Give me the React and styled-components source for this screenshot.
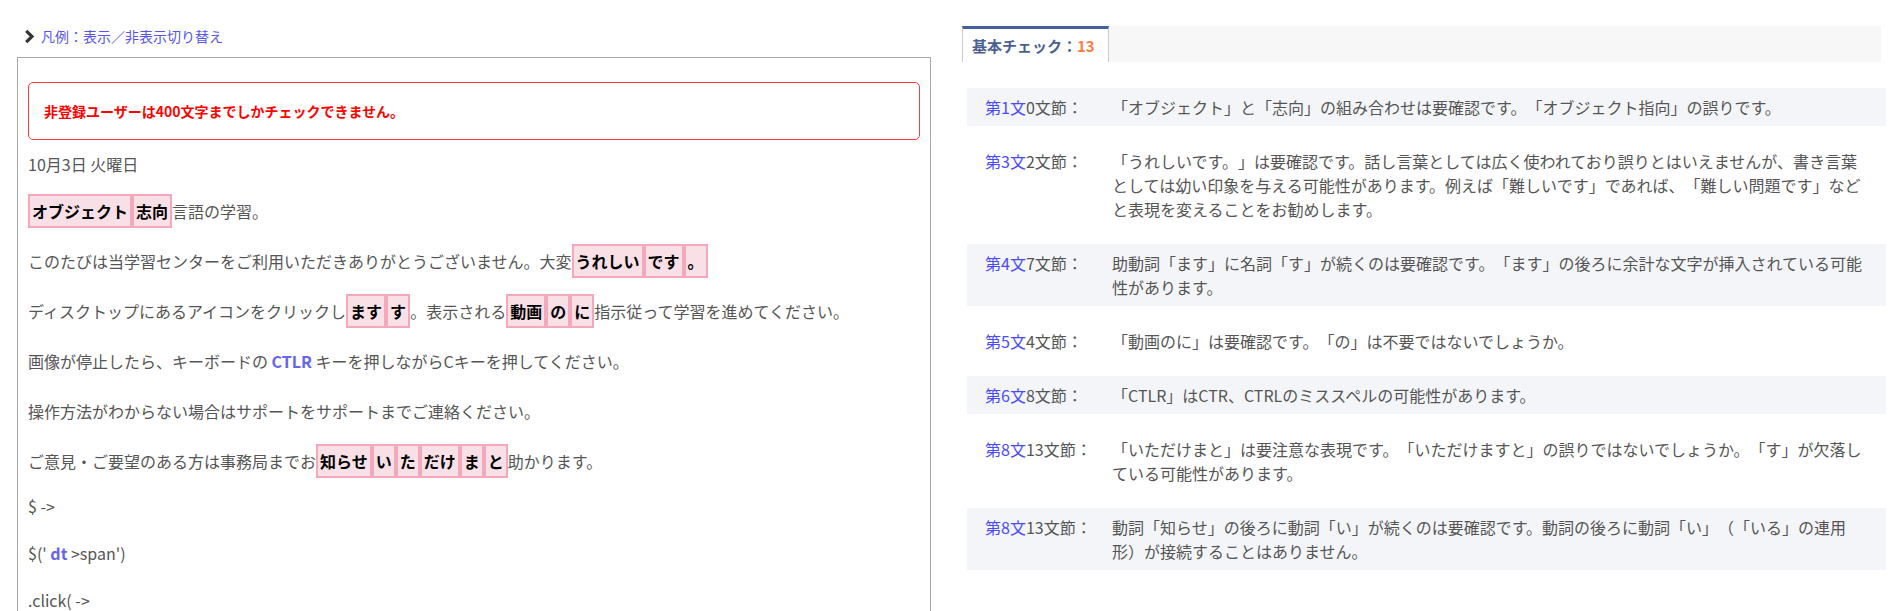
import React from 'react';
import styled, { createGlobalStyle } from 'styled-components';

const GlobalStyle = createGlobalStyle`
  html, body {
    margin: 0;
    background: #fff;
  }
  body {
    font-family: "Noto Sans CJK JP", "Noto Sans", sans-serif;
    color: #555;
    text-spacing-trim: space-all;
  }
`;

// check results shown in the right column
const results = [
  { sentence: 1, clause: 0, text: '「オブジェクト」と「志向」の組み合わせは要確認です。「オブジェクト指向」の誤りです。' },
  { sentence: 3, clause: 2, text: '「うれしいです。」は要確認です。話し言葉としては広く使われており誤りとはいえませんが、書き言葉 としては幼い印象を与える可能性があります。例えば「難しいです」であれば、「難しい問題です」などと表現を変えることをお勧めします。' },
  { sentence: 4, clause: 7, text: '助動詞「ます」に名詞「す」が続くのは要確認です。「ます」の後ろに余計な文字が挿入されている可能性があります。' },
  { sentence: 5, clause: 4, text: '「動画のに」は要確認です。「の」は不要ではないでしょうか。' },
  { sentence: 6, clause: 8, text: '「CTLR」はCTR、CTRLのミススペルの可能性があります。' },
  { sentence: 8, clause: 13, text: '「いただけまと」は要注意な表現です。「いただけますと」の誤りではないでしょうか。「す」が欠落している可能性があります。' },
  { sentence: 8, clause: 13, text: '動詞「知らせ」の後ろに動詞「い」が続くのは要確認です。動詞の後ろに動詞「い」（「いる」の連用形）が接続することはありません。' },
];

const App = () => (
  <>
    <GlobalStyle />
    <Page>
      <LeftColumn>
        <LegendToggle type="button">
          <svg width="11" height="15" viewBox="0 0 11 15">
            <path d="M2.2 1.8 L8 7.5 L2.2 13.2" fill="none" stroke="#333" strokeWidth="3.2" />
          </svg>
          凡例：表示／非表示切り替え
        </LegendToggle>

        <Editor>
          <Alert>非登録ユーザーは400文字までしかチェックできません。</Alert>
          <Para $gap={21}>10月3日 火曜日</Para>
          <Para><Mark>オブジェクト</Mark><Mark>志向</Mark>言語の学習。</Para>
          <Para>
            このたびは当学習センターをご利用いただきありがとうございません。大変
            <Mark>うれしい</Mark><Mark>です</Mark><Mark>。</Mark>
          </Para>
          <Para>
            ディスクトップにあるアイコンをクリックし<Mark>ます</Mark><Mark>す</Mark>。表示される
            <Mark>動画</Mark><Mark>の</Mark><Mark>に</Mark>指示従って学習を進めてください。
          </Para>
          <Para>画像が停止したら、キーボードの <Keyword>CTLR</Keyword> キーを押しながらCキーを押してください。</Para>
          <Para>操作方法がわからない場合はサポートをサポートまでご連絡ください。</Para>
          <Para $gap={19}>
            ご意見・ご要望のある方は事務局までお
            <Mark>知らせ</Mark><Mark>い</Mark><Mark>た</Mark><Mark>だけ</Mark><Mark>ま</Mark><Mark>と</Mark>助かります。
          </Para>
          <Para $gap={21}>$ -&gt;</Para>
          <Para $gap={21}>$(' <Keyword>dt</Keyword> &gt;span')</Para>
          <Para $gap={21}>.click( -&gt;</Para>
        </Editor>
      </LeftColumn>

      <RightColumn>
        <TabBar>
          <Tab>基本チェック：<Count>13</Count></Tab>
        </TabBar>
        <ResultList>
          {results.map((r, i) => (
            <ResultRow key={i} $shaded={i % 2 === 0}>
              <RowLabel>
                <SentenceLink>第{r.sentence}文</SentenceLink>{r.clause}文節：
              </RowLabel>
              <RowMessage>{r.text}</RowMessage>
            </ResultRow>
          ))}
        </ResultList>
      </RightColumn>
    </Page>
  </>
);

const Page = styled.div`
  display: flex;
  align-items: flex-start;
  gap: 31px;
  padding: 26px 8px 0 17px;
`;

const LeftColumn = styled.section`
  width: 914px;
  flex-shrink: 0;
`;

const LegendToggle = styled.button`
  display: flex;
  align-items: center;
  gap: 6px;
  height: 20px;
  margin: 0 0 11px 7px;
  padding: 0;
  border: none;
  background: none;
  cursor: pointer;
  font: inherit;
  font-size: 14px;
  line-height: 20px;
  color: #5555ee;
`;

const Editor = styled.div`
  border: 1px solid #aaa;
  padding: 24px 10px;
  font-size: 16px;
`;

const Alert = styled.div`
  border: 1px solid #ff3b3b;
  border-radius: 5px;
  padding: 18px 15px;
  margin-bottom: 11px;
  font-size: 14px;
  font-weight: bold;
  line-height: 20px;
  color: #f00;
`;

const Para = styled.p`
  margin: 0 0 ${p => p.$gap ?? 24}px;
  line-height: 26px;
  white-space: nowrap;
`;

// flagged words inside the text
const Mark = styled.span`
  padding: 3px 2px;
  border: 2px solid #f3a9bb;
  background: #f9e0e7;
  color: #000;
  font-weight: bold;
`;

const Keyword = styled.b`
  color: #6464ee;
`;

const RightColumn = styled.section`
  width: 924px;
  flex-shrink: 0;
`;

const TabBar = styled.div`
  display: flex;
  height: 36px;
  margin: 0 5px 26px 0;
  background: #f7f7f8;
`;

const Tab = styled.div`
  box-sizing: border-box;
  display: flex;
  align-items: center;
  width: 147px;
  height: 36px;
  padding: 0 0 0 9px;
  background: #fff;
  border-left: 1px solid #ccc;
  border-right: 1px solid #ccc;
  border-top: 3px solid #45619a;
  font-size: 15px;
  font-weight: bold;
  color: #4a5f8f;
`;

const Count = styled.span`
  color: #ff7a45;
`;

const ResultList = styled.div`
  margin-left: 5px;
`;

const ResultRow = styled.div`
  display: flex;
  padding: 7px 14px 7px 18px;
  margin-bottom: 16px;
  background: ${p => (p.$shaded ? '#f4f5f9' : 'transparent')};
  font-size: 16px;
  line-height: 24px;
`;

const RowLabel = styled.div`
  width: 127px;
  flex-shrink: 0;
  color: #555;
`;

const SentenceLink = styled.span`
  color: #4a4aff;
`;

const RowMessage = styled.div`
  flex: 1;
  color: #555;
`;

export default App;
